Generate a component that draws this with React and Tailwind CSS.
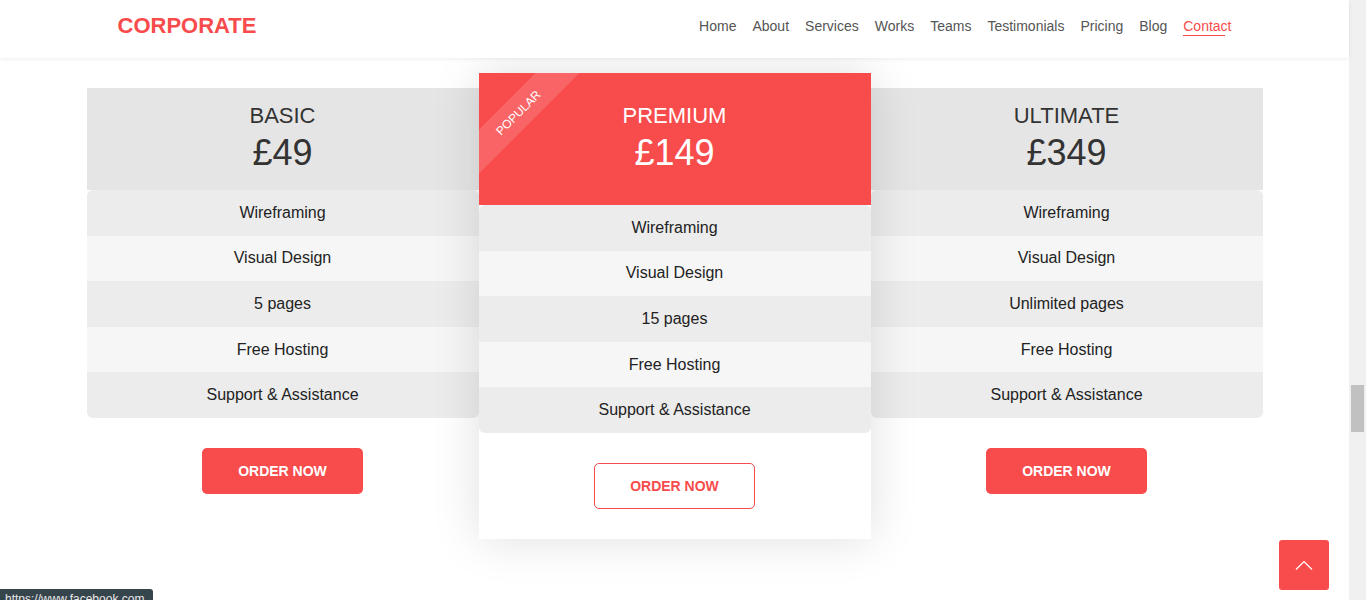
import React from 'react';

const navLinks = ['Home', 'About', 'Services', 'Works', 'Teams', 'Testimonials', 'Pricing', 'Blog', 'Contact'];

const plans = [
  { name: 'BASIC', price: '£49', pages: '5 pages' },
  { name: 'PREMIUM', price: '£149', pages: '15 pages', popular: true },
  { name: 'ULTIMATE', price: '£349', pages: 'Unlimited pages' },
];

const PlanCard = ({ plan }) => {
  const features = ['Wireframing', 'Visual Design', plan.pages, 'Free Hosting', 'Support & Assistance'];
  const popular = plan.popular;

  return (
    <div
      className={
        popular
          ? 'relative z-10 w-[392px] bg-white pb-[30px] shadow-[0_0_45px_rgba(0,0,0,0.13)]'
          : 'relative w-[392px] mt-[15px]'
      }
    >
      {/* Header */}
      <div
        className={
          popular
            ? 'relative overflow-hidden bg-[#f84b4c] pt-[28px] pb-[32px] text-center text-white'
            : 'bg-[#e5e5e5] pt-[13px] pb-[17px] text-center text-[#333]'
        }
      >
        {popular && (
          <div className="absolute left-[-61px] top-[24px] w-[200px] h-[31px] -rotate-45 bg-white/15 flex items-center justify-center">
            <span className="text-[12px] leading-none text-white">POPULAR</span>
          </div>
        )}
        <h3 className="text-[22px] leading-[30px]">{plan.name}</h3>
        <div className="mt-[2px] text-[36px] leading-[40px]">{plan.price}</div>
      </div>

      {/* Features */}
      <ul className="rounded-md overflow-hidden text-[16px] text-[#222]">
        {features.map((f, i) => (
          <li
            key={f}
            className={`h-[45.6px] flex items-center justify-center ${i % 2 === 0 ? 'bg-[#ececec]' : 'bg-[#f6f6f6]'}`}
          >
            {f}
          </li>
        ))}
      </ul>

      <div className="flex justify-center pt-[30px]">
        <button
          className={
            popular
              ? 'w-[161px] h-[46px] pt-px rounded-[5px] border border-[#f84b4c] bg-white text-[14px] font-bold text-[#f84b4c]'
              : 'w-[161px] h-[46px] pt-px rounded-[5px] bg-[#f84b4c] text-[14px] font-bold text-white'
          }
        >
          ORDER NOW
        </button>
      </div>
    </div>
  );
};

export default function App() {
  return (
    <div className="relative h-[600px] overflow-hidden bg-white flex font-['Liberation_Sans',Arial,sans-serif]">
      <div className="flex-1">
        {/* Navbar */}
        <nav className="relative z-20 h-[58px] bg-white shadow-[0_1px_4px_rgba(0,0,0,0.07)]">
          <div className="w-[1140px] mx-auto h-full px-[13px] pb-[6px] flex items-center justify-between">
            <a className="text-[22px] font-bold text-[#f84b4c] leading-none">CORPORATE</a>
            <ul className="flex items-center gap-4 text-[14px] text-[#555]">
              {navLinks.map((l) => (
                <li key={l} className="relative">
                  <a className={l === 'Contact' ? 'text-[#f84b4c]' : ''}>{l}</a>
                  {l === 'Contact' && (
                    <span className="absolute left-0 top-[19px] w-[42px] h-px bg-[#f84b4c]" />
                  )}
                </li>
              ))}
            </ul>
          </div>
        </nav>

        {/* Pricing */}
        <section className="pt-[15px]">
          <div className="w-[1176px] mx-auto flex items-start">
            {plans.map((p) => (
              <PlanCard key={p.name} plan={p} />
            ))}
          </div>
        </section>
      </div>

      {/* Scrollbar */}
      <div className="w-[17px] bg-[#f0f0f0] pt-[385px]">
        <div className="mx-auto w-[13px] h-[47px] bg-[#c1c1c1]" />
      </div>

      {/* Back to top */}
      <button className="absolute left-[1279px] top-[540px] w-[50px] h-[50px] rounded-[3px] bg-[#f84b4c] flex items-center justify-center">
        <svg width="18" height="10" viewBox="0 0 18 10" fill="none">
          <polyline points="1,9.5 9,1.5 17,9.5" stroke="white" strokeWidth="1.2" />
        </svg>
      </button>

      {/* Status tooltip */}
      <div className="absolute left-0 top-[589px] w-[153px] h-[20px] rounded-tr-[3px] bg-[#36444c] px-[5px] pt-[2px] text-[12px] leading-[16px] text-[#e8e8e8]">
        https://www.facebook.com
      </div>
    </div>
  );
}
